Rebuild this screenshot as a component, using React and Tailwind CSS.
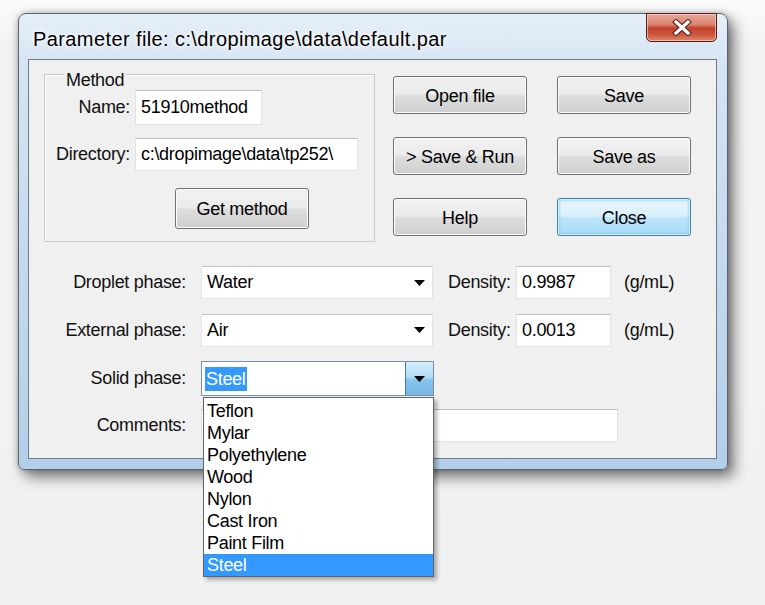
import React from "react";

const btn =
  "w-[134px] h-[38px] pt-[2px] rounded-[3px] border border-[#707070] shadow-[inset_0_0_0_1px_#fcfcfc] bg-[linear-gradient(#f2f2f2_0%,#ebebeb_48%,#dddddd_52%,#cfcfcf_100%)] text-[18px] text-black flex items-center justify-center";

const focusBtn =
  "w-[134px] h-[38px] pt-[2px] rounded-[3px] border border-[#3c7fb1] shadow-[inset_0_0_0_1px_#d6f1fc,inset_0_0_3px_1px_#5fc6f0] bg-[linear-gradient(#eaf6fd_0%,#d9f0fc_48%,#bee6fd_52%,#a7d9f5_100%)] text-[18px] text-black flex items-center justify-center";

const field =
  "h-[33px] bg-white border border-[#e2e2e2] border-t-[#bdbdbd] flex items-center pl-[5px] text-[18px] text-black";

const materials = ["Teflon", "Mylar", "Polyethylene", "Wood", "Nylon", "Cast Iron", "Paint Film", "Steel"];

function Arrow() {
  return (
    <svg width="11" height="6" viewBox="0 0 11 6">
      <path d="M0 0H11L5.5 6Z" fill="#000" />
    </svg>
  );
}

function Combo({ value }) {
  return (
    <div className="w-[232px] h-[33px] bg-white border border-[#e2e2e2] border-t-[#c4c4c4] flex items-center justify-between pl-[5px] pr-[7px]">
      <span className="text-[18px] text-black">{value}</span>
      <Arrow />
    </div>
  );
}

function Density({ value }) {
  return (
    <>
      <span className="ml-[15px] w-[68px] text-[18px]">Density:</span>
      <div className={field + " w-[95px]"}>{value}</div>
      <span className="ml-[13px] text-[18px]">(g/mL)</span>
    </>
  );
}

export default function App() {
  return (
    <div
      className="w-[765px] h-[605px] bg-[linear-gradient(180deg,#fbfbfb_0%,#f3f3f3_8%,#f1f1f1_100%)] pt-[13px] pl-[18px] text-[#111] tracking-[-0.3px]"
      style={{ fontFamily: '"Liberation Sans", Arial, sans-serif' }}
    >
      {/* window frame */}
      <div className="relative w-[710px] h-[457px] rounded-t-[8px] rounded-b-[6px] border border-[#5a6470] bg-[linear-gradient(180deg,#e6eff8_0%,#d5e4f3_12%,#c2d8ee_60%,#b3cfea_100%)] shadow-[6px_7px_14px_rgba(0,0,0,0.5),0_0_6px_rgba(0,0,0,0.25)] px-[9px] pb-[10px]">
        <div className="h-[45px] flex items-center pl-[5px] pt-[4px]">
          <span className="text-[20px] tracking-[0.4px] text-black [text-shadow:0_0_6px_#ffffff,0_0_3px_#ffffff]">
            Parameter file: c:\dropimage\data\default.par
          </span>
        </div>

        {/* close button */}
        <div className="absolute -top-px right-[10px] w-[71px] h-[29px] rounded-b-[5px] border border-[#4d1f17] shadow-[inset_0_0_0_1px_rgba(255,220,210,0.6)] bg-[linear-gradient(180deg,#e9a999_0%,#d9826c_40%,#c3412b_52%,#c9553c_75%,#e0866b_100%)] flex items-center justify-center">
          <svg width="22" height="17" viewBox="0 0 22 17">
            <path d="M5 3L17 14M17 3L5 14" stroke="#5b2a22" strokeWidth="5.5" strokeLinecap="square" />
            <path d="M5 3L17 14M17 3L5 14" stroke="#ffffff" strokeWidth="3.2" strokeLinecap="square" />
          </svg>
        </div>

        {/* client area */}
        <div className="w-[689px] h-[400px] bg-[#f0f0f0] border border-[#6f7b88] pt-[14px] pl-[15px] flex flex-col">
          <div className="flex">
            {/* method group */}
            <div className="w-[331px] h-[168px] border border-[#c8c8c8] shadow-[inset_1px_1px_0_#ffffff] flex flex-col">
              <span className="-mt-[5px] ml-[19px] w-fit px-[2px] bg-[#f0f0f0] text-[18px] leading-[20px]">Method</span>
              <div className="mt-0 flex items-center pl-[10px]">
                <span className="w-[75px] text-right text-[18px]">Name:</span>
                <div className={field + " ml-[5px] w-[127px] h-[35px]"}>51910method</div>
              </div>
              <div className="mt-[13px] flex items-center pl-[10px]">
                <span className="w-[75px] text-right text-[18px]">Directory:</span>
                <div className={field + " ml-[5px] w-[223px]"}>c:\dropimage\data\tp252\</div>
              </div>
              <div className={btn + " mt-[17px] ml-[130px] w-[133px] h-[41px]"}>Get method</div>
            </div>

            {/* action buttons */}
            <div className="ml-[18px] mt-[2px] grid grid-cols-[134px_134px] gap-x-[30px] gap-y-[23px] h-fit">
              <div className={btn}>Open file</div>
              <div className={btn}>Save</div>
              <div className={btn}>&gt; Save &amp; Run</div>
              <div className={btn}>Save as</div>
              <div className={btn}>Help</div>
              <div className={focusBtn}>Close</div>
            </div>
          </div>

          {/* phase rows */}
          <div className="mt-[24px] -ml-[15px] flex items-center h-[33px]">
            <span className="w-[157px] text-right text-[18px]">Droplet phase:</span>
            <div className="ml-[15px]">
              <Combo value="Water" />
            </div>
            <Density value="0.9987" />
          </div>
          <div className="mt-[14px] -ml-[15px] flex items-center h-[34px]">
            <span className="w-[157px] text-right text-[18px]">External phase:</span>
            <div className="ml-[15px]">
              <Combo value="Air" />
            </div>
            <Density value="0.0013" />
          </div>
          <div className="mt-[14px] -ml-[15px] flex items-center h-[35px]">
            <span className="w-[157px] text-right text-[18px]">Solid phase:</span>
            <div className="relative ml-[15px] z-10">
              <div className="w-[233px] h-[35px] bg-white border border-[#7a8fa6] flex items-center pl-[3px]">
                <span className="bg-[#3399ff] text-white text-[18px] leading-[24px] px-px">Steel</span>
                <div className="ml-auto w-[28px] h-full border-l border-[#3c7fb1] bg-[linear-gradient(180deg,#d3ecfb_0%,#b3dcf6_45%,#86c3ec_55%,#76b6e3_100%)] flex items-center justify-center">
                  <Arrow />
                </div>
              </div>
              {/* open dropdown list */}
              <div className="absolute left-[2px] top-[36px] w-[231px] pt-[2px] bg-white border border-[#646464] shadow-[3px_3px_4px_rgba(0,0,0,0.3)]">
                {materials.map((m) => (
                  <div
                    key={m}
                    className={
                      "h-[22px] leading-[22px] pl-[3px] text-[18px] " +
                      (m === "Steel" ? "bg-[#3399ff] text-white" : "text-black")
                    }
                  >
                    {m}
                  </div>
                ))}
              </div>
            </div>
          </div>
          <div className="mt-[13px] -ml-[15px] flex items-center h-[33px]">
            <span className="w-[157px] text-right text-[18px]">Comments:</span>
            <div className={field + " ml-[15px] w-[417px]"}></div>
          </div>
        </div>
      </div>
    </div>
  );
}
